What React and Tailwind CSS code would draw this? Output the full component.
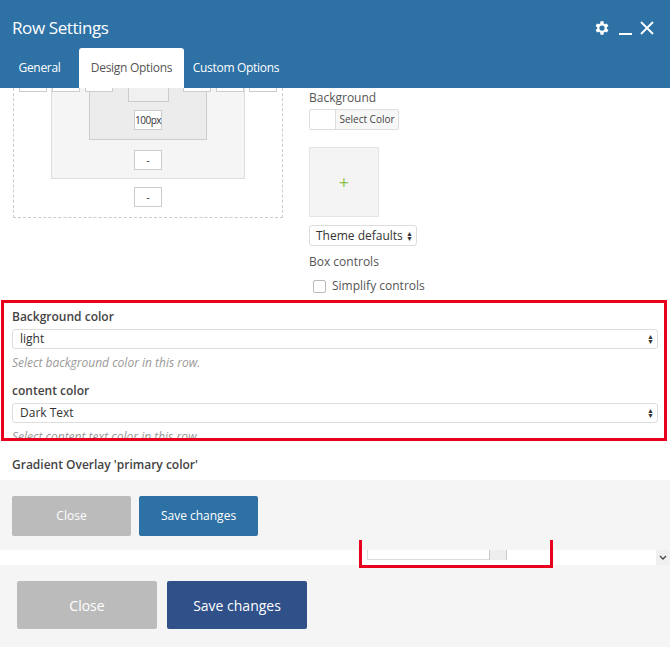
export default function App() {
  const arrows = <span className="shrink-0 text-[7px] leading-[5px] flex flex-col"><span>▲</span><span>▼</span></span>
  return (
    <div className="relative w-[670px] h-[647px] overflow-hidden bg-white text-[#333]" style={{ fontFamily: '"Open Sans", sans-serif' }}>
      {/* header */}
      <div className="h-[88px] bg-[#2e71a5] flex flex-col">
        <div className="flex items-center justify-between pl-3 pr-4 pt-[8px] h-[48px]">
          <span className="text-white text-[17px] tracking-[-0.4px]">Row Settings</span>
          <div className="flex items-center gap-[8px] text-white">
            <svg width="18" height="18" viewBox="0 0 24 24" fill="white"><path d="M19.4 13a7.6 7.6 0 0 0 0-2l2.1-1.6-2-3.5-2.5 1a7.4 7.4 0 0 0-1.7-1L15 3h-4l-.4 2.9a7.4 7.4 0 0 0-1.7 1l-2.5-1-2 3.5L6.6 11a7.6 7.6 0 0 0 0 2l-2.1 1.6 2 3.5 2.5-1a7.4 7.4 0 0 0 1.7 1L11 21h4l.4-2.9a7.4 7.4 0 0 0 1.7-1l2.5 1 2-3.5zM13 15.5a3.5 3.5 0 1 1 0-7 3.5 3.5 0 0 1 0 7z" transform="translate(-1 0)"/></svg>
            <div className="w-[13px] h-[2px] bg-white mt-[12px]"></div>
            <svg width="14" height="14" viewBox="0 0 14 14" stroke="white" strokeWidth="1.8"><path d="M1 1L13 13M13 1L1 13"/></svg>
          </div>
        </div>
        <div className="flex items-end h-[40px] text-[12px] tracking-[-0.3px]">
          <div className="w-[79px] h-[40px] flex items-center justify-center text-white">General</div>
          <div className="w-[105px] h-[40px] bg-white rounded-t-[3px] flex items-center justify-center text-[#555]">Design Options</div>
          <div className="w-[104px] h-[40px] flex items-center justify-center text-white">Custom Options</div>
        </div>
      </div>
      {/* body */}
      <div className="h-[392px] flex flex-col">
        <div className="flex h-[212px]">
          <div className="w-[309px] pl-[13px]">
            <div className="w-[270px] h-[130px] border border-dashed border-t-0 border-[#ccc] relative flex flex-col items-center">
              <div className="absolute left-[5px] right-[5px] top-0 flex justify-between">
                {[0,1,2,3,4,5,6,7].map(i => <div key={i} className={`w-[28px] h-[4px] border border-t-0 border-[#ccc] bg-white ${i===3||i===4?'invisible':''}`}></div>)}
              </div>
              <div className="w-[194px] h-[91px] bg-[#f5f5f5] border border-t-0 border-[#ddd] flex flex-col items-center">
                <div className="w-[118px] h-[52px] bg-[#ececec] border border-t-0 border-[#ccc] flex flex-col items-center">
                  <div className="w-[41px] h-[14px] border border-t-0 border-[#ccc] bg-[#f0f0f0]"></div>
                  <div className="mt-[8px] w-[28px] h-[20px] border border-[#ccc] bg-white text-[10px] tracking-[-0.5px] flex items-center justify-center">100px</div>
                </div>
                <div className="mt-[10px] w-[28px] h-[20px] border border-[#ccc] bg-white text-[10px] flex items-center justify-center">-</div>
              </div>
              <div className="mt-[8px] w-[28px] h-[20px] border border-[#ccc] bg-white text-[10px] flex items-center justify-center">-</div>
            </div>
          </div>
          <div className="flex flex-col text-[12px] text-[#555]">
            <div className="mt-[1px]">Background</div>
            <div className="mt-[2px] w-[90px] h-[21px] border border-[#ddd] rounded-[2px] flex text-[10px]">
              <div className="w-[26px] border-r border-[#ddd]"></div>
              <div className="flex-1 bg-[#f7f7f7] flex items-center justify-center text-[#444] whitespace-nowrap">Select Color</div>
            </div>
            <div className="mt-[17px] w-[70px] h-[70px] bg-[#f4f4f4] border border-[#e6e6e6] flex items-center justify-center text-[#8bc34a] text-[18px]">+</div>
            <div className="mt-[8px] w-[108px] h-[21px] border border-[#ddd] rounded-[3px] flex items-center justify-between pl-[6px] pr-[3px] text-[12px] text-[#333] whitespace-nowrap">
              <span>Theme defaults</span>{arrows}
            </div>
            <div className="mt-[7px]">Box controls</div>
            <div className="mt-[6px] flex items-center gap-[6px] ml-[4px]">
              <div className="w-[13px] h-[13px] border border-[#bbb] rounded-[2px]"></div>
              <span>Simplify controls</span>
            </div>
          </div>
        </div>
        <div className="px-[12px] flex flex-col text-[12px]">
          <div className="mt-[8px] font-semibold text-[#444]">Background color</div>
          <div className="mt-[3px] h-[20px] border border-[#ddd] rounded-[3px] flex items-center justify-between pl-[7px] pr-[3px]">
            <span>light</span>{arrows}
          </div>
          <div className="mt-[5px] italic text-[#999]">Select background color in this row.</div>
          <div className="mt-[10px] font-semibold text-[#444]">content color</div>
          <div className="mt-[3px] h-[20px] border border-[#ddd] rounded-[3px] flex items-center justify-between pl-[7px] pr-[3px]">
            <span>Dark Text</span>{arrows}
          </div>
          <div className="mt-[6px] italic text-[#999] h-[10px] overflow-hidden leading-[16px]">Select content text color in this row.</div>
          <div className="mt-[17px] font-semibold text-[#444]">Gradient Overlay 'primary color'</div>
        </div>
      </div>
      {/* footer 1 */}
      <div className="h-[70px] bg-[#f5f5f5] flex items-start gap-[8px] pl-[12px] pt-[16px] text-[12px]">
        <div className="w-[119px] h-[40px] bg-[#bbbbbb] rounded-[2px] text-white flex items-center justify-center">Close</div>
        <div className="w-[119px] h-[40px] bg-[#2e71a5] rounded-[2px] text-white flex items-center justify-center">Save changes</div>
      </div>
      <div className="h-[15px] bg-white relative">
        <div className="absolute left-[367px] top-0 w-[140px] h-[10px] border-b border-l border-[#ddd]"><div className="absolute right-0 top-0 w-[18px] h-[10px] bg-[#eee] border-l border-r border-[#ccc]"></div></div>
        <div className="absolute right-0 top-0 w-[14px] h-[15px] bg-[#f0f0f0] flex items-center justify-center">
          <svg width="8" height="6" viewBox="0 0 8 6" stroke="#444" strokeWidth="1.3" fill="none"><path d="M1 1l3 3 3-3"/></svg>
        </div>
      </div>
      {/* footer 2 */}
      <div className="h-[82px] bg-[#f5f5f5] flex items-start gap-[10px] pl-[17px] pt-[16px] text-[14px]">
        <div className="w-[140px] h-[48px] bg-[#bbbbbb] rounded-[2px] text-white flex items-center justify-center">Close</div>
        <div className="w-[140px] h-[48px] bg-[#30508a] rounded-[2px] text-white flex items-center justify-center">Save changes</div>
      </div>
      {/* red highlight overlays */}
      <div className="absolute left-[1px] top-[300px] w-[666px] h-[141px] border-[3px] border-[#e8001c]"></div>
      <div className="absolute left-[359px] top-[540px] w-[194px] h-[28px] border-[3px] border-t-0 border-[#e8001c]"></div>
    </div>
  )
}
